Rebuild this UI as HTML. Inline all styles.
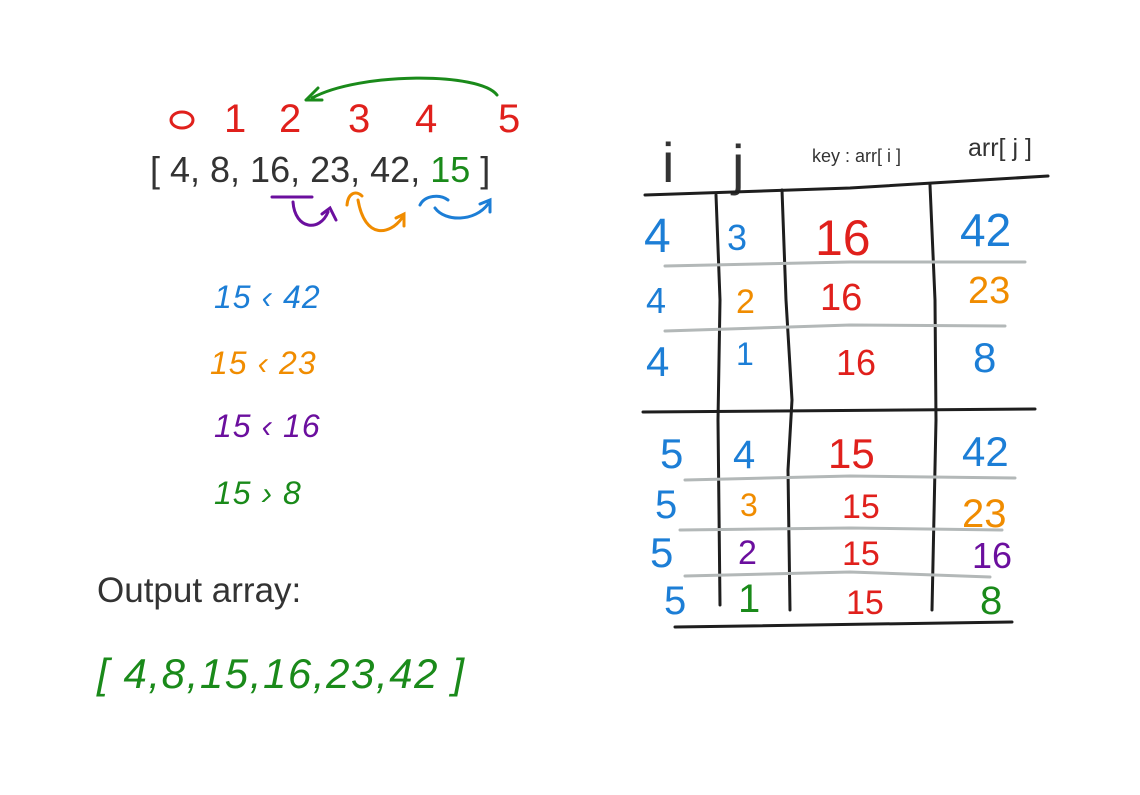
<!DOCTYPE html>
<html><head><meta charset="utf-8"><style>
html,body{margin:0;padding:0;background:#fff;width:1140px;height:795px;overflow:hidden}
svg{display:block}
text{font-family:"Liberation Sans",sans-serif}
</style></head><body>
<svg width="1140" height="795" viewBox="0 0 1140 795" xmlns="http://www.w3.org/2000/svg">
<rect width="1140" height="795" fill="#fff"/>
<!-- indices -->
<ellipse cx="182" cy="120" rx="11" ry="8" fill="none" stroke="#e0201c" stroke-width="3"/>
<g fill="#e0201c" font-size="40">
<text x="224" y="132">1</text>
<text x="279" y="132">2</text>
<text x="348" y="132">3</text>
<text x="415" y="132">4</text>
<text x="498" y="132">5</text>
</g>
<path d="M497 95 C480 72 360 72 312 98" fill="none" stroke="#1a8a1a" stroke-width="3" stroke-linecap="round"/>
<path d="M306 100 L318 88 M306 100 L322 100" fill="none" stroke="#1a8a1a" stroke-width="3" stroke-linecap="round"/>
<!-- array -->
<text x="150" y="182" font-size="36" fill="#333">[ 4, 8, 16, 23, 42, <tspan fill="#1a8a1a">15</tspan> ]</text>
<path d="M272 197 L312 197 M293 202 C295 230 320 232 328 212" fill="none" stroke="#6b0f9e" stroke-width="3" stroke-linecap="round"/>
<path d="M322 214 L330 208 L336 220" fill="none" stroke="#6b0f9e" stroke-width="3" stroke-linecap="round"/>
<path d="M347 205 C348 193 356 190 362 196 M358 200 C365 240 390 235 402 218 M396 218 L404 214 L404 226" fill="none" stroke="#f08c00" stroke-width="3" stroke-linecap="round"/>
<path d="M420 205 C425 195 440 194 448 200 M435 208 C445 222 475 222 488 204 M480 204 L490 200 L490 212" fill="none" stroke="#1c7ed6" stroke-width="3" stroke-linecap="round"/>
<!-- comparisons -->
<g font-size="32" font-style="italic" letter-spacing="1">
<text x="214" y="308" fill="#1c7ed6">15 ‹ 42</text>
<text x="210" y="374" fill="#f08c00">15 ‹ 23</text>
<text x="214" y="437" fill="#6b0f9e">15 ‹ 16</text>
<text x="214" y="504" fill="#1a8a1a">15 › 8</text>
</g>
<text x="97" y="602" font-size="35" fill="#333">Output array:</text>
<text x="97" y="688" font-size="42" font-style="italic" fill="#1a8a1a" letter-spacing="1" textLength="368">[ 4,8,15,16,23,42 ]</text>
<!-- table header -->
<text x="662" y="182" font-size="56" fill="#333">i</text>
<text x="732" y="184" font-size="56" fill="#333">j</text>
<text x="812" y="162" font-size="18" fill="#333">key : arr[ i ]</text>
<text x="968" y="156" font-size="25" fill="#333">arr[ j ]</text>
<!-- lines -->
<g fill="none" stroke="#1e1e1e" stroke-width="3" stroke-linecap="round">
<path d="M645 195 L850 188 L1048 176"/>
<path d="M716 195 L720 300 L718 420 L720 605"/>
<path d="M782 190 L786 300 L792 400 L788 470 L790 610"/>
<path d="M930 185 L935 300 L936 420 L932 610"/>
<path d="M643 412 L1035 409"/>
<path d="M675 627 L1012 622"/>
</g>
<g fill="none" stroke="#b3b8b8" stroke-width="3" stroke-linecap="round">
<path d="M665 266 L850 262 L1025 262"/>
<path d="M665 331 L850 325 L1005 326"/>
<path d="M685 480 L850 476 L1015 478"/>
<path d="M680 530 L850 528 L1002 530"/>
<path d="M685 576 L850 572 L990 577"/>
</g>
<!-- rows -->
<g font-size="40">
<text x="644" y="252" font-size="48" fill="#1c7ed6">4</text>
<text x="727" y="250" font-size="36" fill="#1c7ed6">3</text>
<text x="815" y="255" font-size="50" fill="#e0201c">16</text>
<text x="960" y="246" font-size="46" fill="#1c7ed6">42</text>
<text x="646" y="313" font-size="36" fill="#1c7ed6">4</text>
<text x="736" y="313" font-size="34" fill="#f08c00">2</text>
<text x="820" y="310" font-size="38" fill="#e0201c">16</text>
<text x="968" y="303" font-size="38" fill="#f08c00">23</text>
<text x="646" y="376" font-size="42" fill="#1c7ed6">4</text>
<text x="736" y="365" font-size="32" fill="#1c7ed6">1</text>
<text x="836" y="375" font-size="36" fill="#e0201c">16</text>
<text x="973" y="372" font-size="42" fill="#1c7ed6">8</text>
<text x="660" y="468" font-size="42" fill="#1c7ed6">5</text>
<text x="733" y="468" font-size="40" fill="#1c7ed6">4</text>
<text x="828" y="468" font-size="42" fill="#e0201c">15</text>
<text x="962" y="466" font-size="42" fill="#1c7ed6">42</text>
<text x="655" y="518" font-size="40" fill="#1c7ed6">5</text>
<text x="740" y="516" font-size="32" fill="#f08c00">3</text>
<text x="842" y="518" font-size="34" fill="#e0201c">15</text>
<text x="962" y="527" font-size="40" fill="#f08c00">23</text>
<text x="650" y="567" font-size="42" fill="#1c7ed6">5</text>
<text x="738" y="564" font-size="34" fill="#6b0f9e">2</text>
<text x="842" y="565" font-size="34" fill="#e0201c">15</text>
<text x="972" y="568" font-size="36" fill="#6b0f9e">16</text>
<text x="664" y="614" font-size="40" fill="#1c7ed6">5</text>
<text x="738" y="612" font-size="40" fill="#1a8a1a">1</text>
<text x="846" y="614" font-size="34" fill="#e0201c">15</text>
<text x="980" y="614" font-size="40" fill="#1a8a1a">8</text>
</g>
</svg>
</body></html>
